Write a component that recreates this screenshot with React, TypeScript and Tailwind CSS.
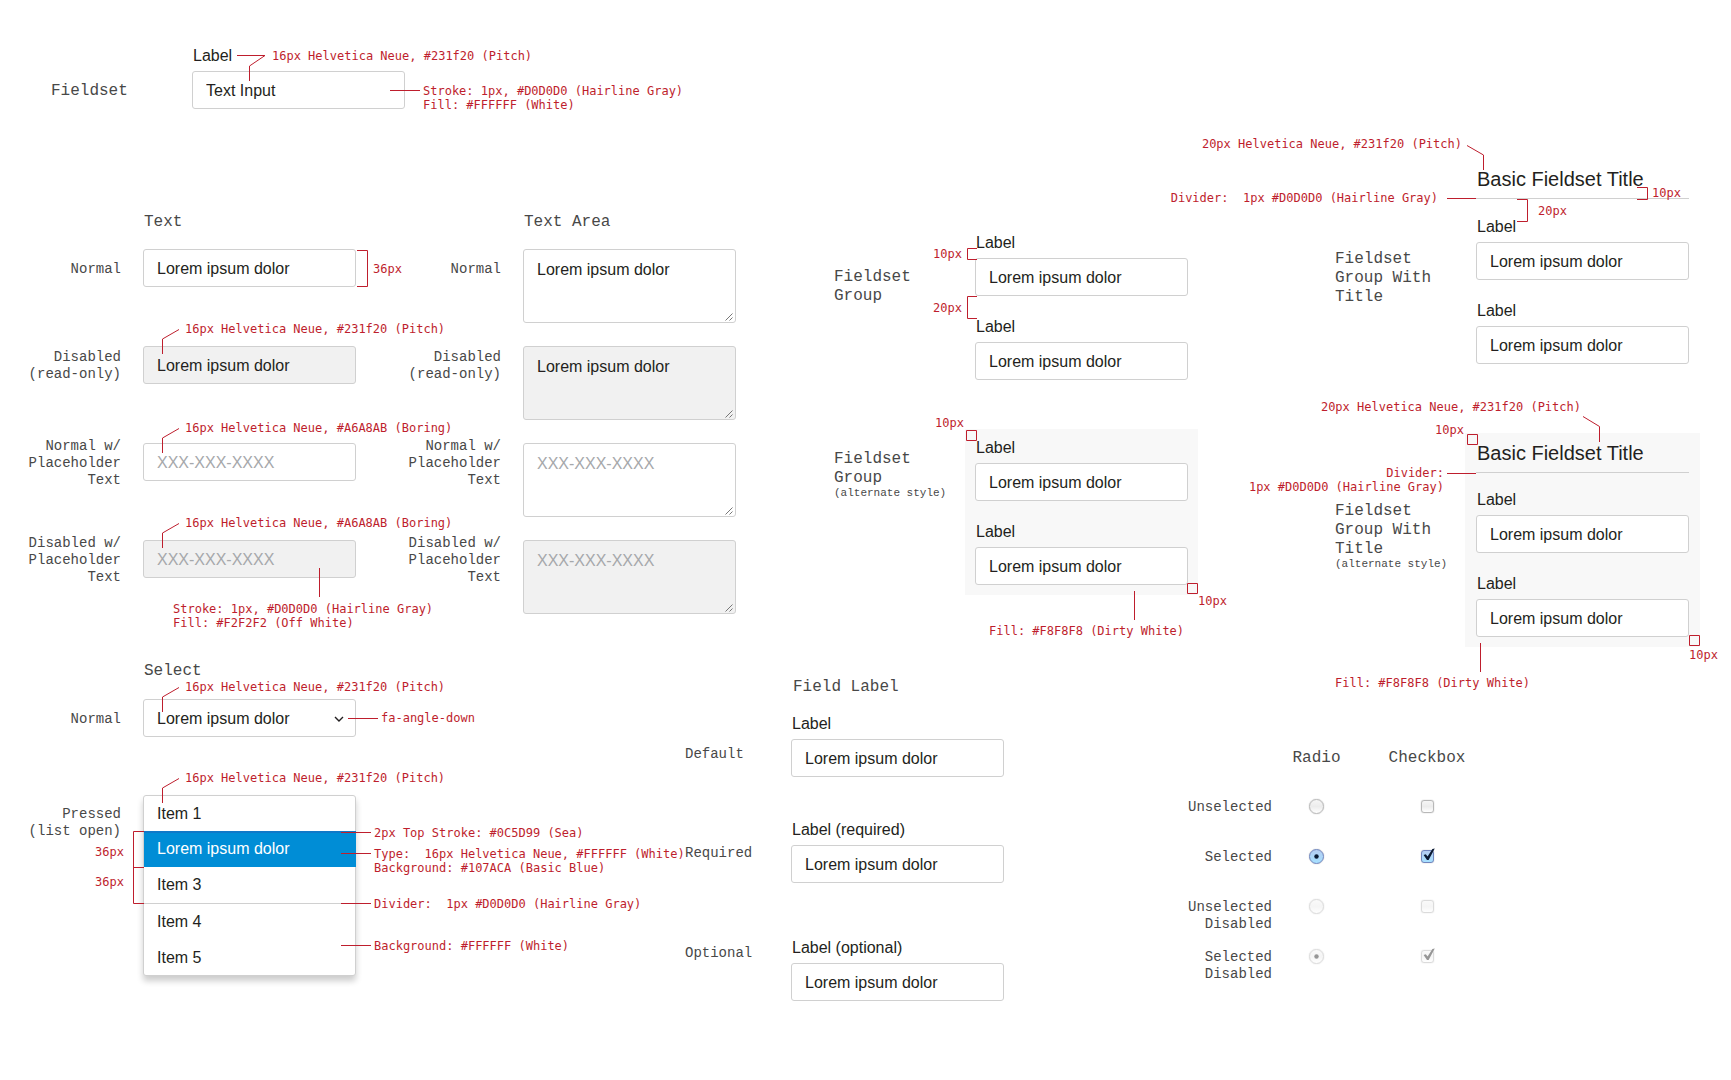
import React, { useId } from "react";
import type { ReactNode } from "react";

const RED = "#be1e2d";
const NOTE_TEXT = "whitespace-pre font-['DejaVu_Sans_Mono',monospace] text-[12px] leading-[14px] text-[#be1e2d]";
const MONO = "font-['Liberation_Mono',monospace] text-[#484848]";
const BOX = "block w-full rounded-[3px] border border-[#d0d0d0] px-[13px] text-[16px] text-[#231f20] outline-none";

const RULE = "M0 0.5 H29";
const SQUARE = "M0.5 0.5 H10.5 V10.5 H0.5 Z";

function Stroke({ className = "", w, h, d }: { className?: string; w: number; h: number; d: string }) {
  return (
    <svg
      aria-hidden="true"
      className={`shrink-0 ${className}`}
      width={w}
      height={h}
      viewBox={`0 0 ${w} ${h}`}
      fill="none"
      stroke={RED}
    >
      <path d={d} />
    </svg>
  );
}

function Over({ className, children }: { className: string; children: ReactNode }) {
  return <div className={`pointer-events-none absolute flex ${NOTE_TEXT} ${className}`}>{children}</div>;
}

function TypeNote({ className, children }: { className: string; children: ReactNode }) {
  return (
    <Over className={`left-[19px] items-start gap-1.5 ${className}`}>
      <Stroke className="mt-2" w={17} h={25} d="M17 0.5 L0.5 10 V25" />
      <p className="pt-px">{children}</p>
    </Over>
  );
}

function RuleNote({ className = "", children }: { className?: string; children: ReactNode }) {
  return (
    <div className={`flex items-start gap-[3px] ${className}`}>
      <Stroke className="mt-1.5" w={30} h={1} d="M0 0.5 H30" />
      <p>{children}</p>
    </div>
  );
}

function Heading({ className = "", children }: { className?: string; children: ReactNode }) {
  return <h2 className={`text-[16px] leading-[19px] font-normal ${MONO} ${className}`}>{children}</h2>;
}

function Side({ className = "", children }: { className?: string; children: ReactNode }) {
  return <div className={`whitespace-nowrap text-[14px] leading-[17px] ${MONO} ${className}`}>{children}</div>;
}

function Field({ label, value = "Lorem ipsum dolor" }: { label: string; value?: string }) {
  const id = useId();
  return (
    <div className="flex w-[213px] flex-col gap-[5px]">
      <label htmlFor={id} className="pt-px pl-px text-[16px] leading-5">
        {label}
      </label>
      <input id={id} type="text" defaultValue={value} className={`${BOX} h-[38px] bg-white pt-0.5`} />
    </div>
  );
}

function Fields() {
  return (
    <div className="flex flex-col gap-5">
      <Field label="Label" />
      <Field label="Label" />
    </div>
  );
}

type RowData = { label: string[]; disabled: boolean; placeholder: boolean };

const ROWS: RowData[] = [
  { label: ["Normal"], disabled: false, placeholder: false },
  { label: ["Disabled", "(read-only)"], disabled: true, placeholder: false },
  { label: ["Normal w/", "Placeholder", "Text"], disabled: false, placeholder: true },
  { label: ["Disabled w/", "Placeholder", "Text"], disabled: true, placeholder: true },
];

const ROW_NOTES: ReactNode[] = [
  <Over className="top-px left-[214px] items-center gap-[5px]">
    <Stroke w={11} h={37} d="M0 0.5 H10.5 V36.5 H0" />
    <p>36px</p>
  </Over>,
  <TypeNote className="-top-[25px]">16px Helvetica Neue, #231f20 (Pitch)</TypeNote>,
  <TypeNote className="-top-[23px]">16px Helvetica Neue, #A6A8AB (Boring)</TypeNote>,
  <>
    <TypeNote className="-top-[25px]">16px Helvetica Neue, #A6A8AB (Boring)</TypeNote>
    <Over className="top-7 left-[30px] flex-col gap-[5px]">
      <Stroke className="ml-[146px]" w={1} h={29} d="M0.5 0 V29" />
      <p>{"Stroke: 1px, #D0D0D0 (Hairline Gray)\nFill: #F2F2F2 (Off White)"}</p>
    </Over>
  </>,
];

function RowLabel({ id, lines }: { id: string; lines: string[] }) {
  return (
    <label
      htmlFor={id}
      className={`flex h-[38px] flex-col items-end justify-center pt-0.5 text-[14px] leading-[17px] whitespace-nowrap ${MONO}`}
    >
      {lines.map((l) => (
        <span key={l}>{l}</span>
      ))}
    </label>
  );
}

function Row({ row, note, index }: { row: RowData; note: ReactNode; index: number }) {
  const bg = row.disabled ? "bg-[#f1f1f1]" : "bg-white";
  const tone = "placeholder:text-[#a6a8ab]";
  const shared = {
    readOnly: row.disabled,
    defaultValue: row.placeholder ? "" : "Lorem ipsum dolor",
    placeholder: row.placeholder ? "XXX-XXX-XXXX" : undefined,
  };
  return (
    <div className="grid grid-cols-[121fr_213px_123fr_213px] gap-x-[22px]">
      <RowLabel id={`text-${index}`} lines={row.label} />
      <div className="relative h-[38px]">
        <input id={`text-${index}`} type="text" {...shared} className={`${BOX} h-[38px] pt-0.5 ${bg} ${tone}`} />
        {note}
      </div>
      <RowLabel id={`area-${index}`} lines={row.label} />
      <div className="relative">
        <textarea
          id={`area-${index}`}
          {...shared}
          className={`${BOX} h-[74px] resize-none py-2.5 leading-5 ${bg} ${tone}`}
        />
        <svg
          aria-hidden="true"
          className="pointer-events-none absolute right-[3px] bottom-[2px]"
          width="8"
          height="8"
          viewBox="0 0 8 8"
          stroke="#777"
          fill="none"
        >
          <path d="M0.5 7.5 L7.5 0.5 M4.5 7.5 L7.5 4.5" />
        </svg>
      </div>
    </div>
  );
}

function Title() {
  return (
    <h3 className="border-b border-[#d0d0d0] pb-[7px] pl-px text-[20px] leading-6 font-normal">Basic Fieldset Title</h3>
  );
}

const SKIN_ON = "border-[#7286bd] bg-linear-to-b from-[#b4cdf2] to-[#a6e0ff]";
const SKIN_OFF = "border-[#b8b8b8] bg-linear-to-b from-[#f6f6f6] via-[#ececec] to-white";

function Toggle({
  type,
  label,
  checked,
  disabled,
}: {
  type: "radio" | "checkbox";
  label: string;
  checked: boolean;
  disabled: boolean;
}) {
  const radio = type === "radio";
  const ink = disabled ? "#303030" : "#0b1a33";
  return (
    <span className={`relative inline-block ${disabled ? "opacity-50" : ""}`}>
      <input
        type={type}
        aria-label={label}
        defaultChecked={checked}
        disabled={disabled}
        className={`block appearance-none border shadow-[0_0_1px_#999] ${
          radio ? "size-[15px] rounded-full" : "size-[13px] rounded-[3px]"
        } ${checked && !disabled ? SKIN_ON : SKIN_OFF}`}
      />
      {checked && (
        <svg
          aria-hidden="true"
          className={`pointer-events-none absolute left-0 ${radio ? "top-0" : "-top-0.5"}`}
          width="15"
          height="15"
          viewBox="0 0 15 15"
        >
          {radio ? (
            <circle cx="7.5" cy="7.5" r="2.2" fill={ink} />
          ) : (
            <path d="M2.6 7 L4.8 6.2 L6.6 8.6 L11.4 1 L13.8 0.5 L7.6 12 L6 12 Z" fill={ink} />
          )}
        </svg>
      )}
    </span>
  );
}

const STATES = [
  { lines: ["Unselected"], checked: false, disabled: false },
  { lines: ["Selected"], checked: true, disabled: false },
  { lines: ["Unselected", "Disabled"], checked: false, disabled: true },
  { lines: ["Selected", "Disabled"], checked: true, disabled: true },
];

function GroupName({ className, lines, alt }: { className: string; lines: string[]; alt?: boolean }) {
  return (
    <div className={className}>
      <Heading>
        {lines.map((l) => (
          <span key={l} className="block">
            {l}
          </span>
        ))}
      </Heading>
      {alt && <p className={`text-[11px] leading-[11px] whitespace-nowrap ${MONO}`}>(alternate style)</p>}
    </div>
  );
}

export default function App() {
  return (
    <main className="min-h-screen overflow-x-hidden bg-white font-['Liberation_Sans',Arial,sans-serif] text-[#231f20]">
      <div className="grid grid-cols-[736fr_464fr_531fr]">
        <section className="pt-[45px]">
          <div className="grid grid-cols-[192fr_544fr] items-start">
            <Heading className="pt-[37px] pl-[51px]">Fieldset</Heading>
            <div className="relative">
              <Field label="Label" value="Text Input" />
              <Over className="top-1 left-[45px] items-start gap-1.5">
                <Stroke className="mt-1.5" w={29} h={26} d="M0 0.5 H28 L12.5 11 V26" />
                <p>16px Helvetica Neue, #231f20 (Pitch)</p>
              </Over>
              <Over className="top-[39px] left-[198px]">
                <RuleNote>{"Stroke: 1px, #D0D0D0 (Hairline Gray)\nFill: #FFFFFF (White)"}</RuleNote>
              </Over>
            </div>
          </div>
          <div className="mt-[104px] grid grid-cols-[121fr_213px_123fr_213px] gap-x-[22px] pb-[17px]">
            <Heading className="col-start-2 pl-px">Text</Heading>
            <Heading className="col-start-4 pl-px">Text Area</Heading>
          </div>
          <div className="flex flex-col gap-[23px]">
            {ROWS.map((row, i) => (
              <Row key={i} row={row} note={ROW_NOTES[i]} index={i} />
            ))}
          </div>
        </section>

        <section className="pt-[232px]">
          <div className="grid grid-cols-[141px_213px] justify-end pr-3">
            <GroupName className="pt-9" lines={["Fieldset", "Group"]} />
            <div className="relative">
              <Fields />
              <Over className="top-[15px] right-[211px] items-center gap-[5px]">
                <p>10px</p>
                <Stroke w={10} h={12} d="M10 0.5 H0.5 V11.5 H10" />
              </Over>
              <Over className="top-16 right-[211px] items-center gap-[5px]">
                <p>20px</p>
                <Stroke w={10} h={23} d="M10 0.5 H0.5 V22.5 H10" />
              </Over>
            </div>
          </div>
          <div className="mt-[49px] grid grid-cols-[141px_213px] justify-end pr-3">
            <GroupName className="pt-[21px]" lines={["Fieldset", "Group"]} alt />
            <div className="relative -mx-2.5 bg-[#f8f8f8] px-2.5 pt-2 pb-2.5">
              <Fields />
              <Over className="-top-[13px] right-[221px] items-start gap-0.5">
                <p>10px</p>
                <Stroke className="mt-3.5" w={11} h={11} d={SQUARE} />
              </Over>
              <Over className="top-[154px] left-[222px] items-start">
                <Stroke w={11} h={11} d={SQUARE} />
                <p className="pt-[11px]">10px</p>
              </Over>
              <Over className="top-[162px] left-6 flex-col gap-1">
                <Stroke className="ml-[145px]" w={1} h={29} d="M0.5 0 V29" />
                <p>Fill: #F8F8F8 (Dirty White)</p>
              </Over>
            </div>
          </div>
        </section>

        <section className="pt-[167px]">
          <div className="grid grid-cols-[141px_213px] justify-end pr-[42px]">
            <GroupName className="pt-[83px]" lines={["Fieldset", "Group With", "Title"]} />
            <div className="relative flex flex-col gap-[17px]">
              <Title />
              <Fields />
              <Over className="-top-[30px] right-[204px] items-start gap-[5px]">
                <p>20px Helvetica Neue, #231f20 (Pitch)</p>
                <Stroke className="mt-2" w={18} h={25} d="M0 0.5 L16.5 10 V25" />
              </Over>
              <Over className="top-6 right-[213px] items-center gap-[9px]">
                <p>{"Divider:  1px #D0D0D0 (Hairline Gray)"}</p>
                <Stroke w={29} h={1} d={RULE} />
              </Over>
              <Over className="top-[19px] left-[161px] items-center gap-1">
                <Stroke w={11} h={13} d="M0 0.5 H10.5 V12.5 H0" />
                <p>10px</p>
              </Over>
              <Over className="top-8 left-[41px] items-center gap-2.5">
                <Stroke w={11} h={23} d="M0 0.5 H10.5 V22.5 H0" />
                <p>20px</p>
              </Over>
            </div>
          </div>
          <div className="mt-[69px] grid grid-cols-[141px_213px] justify-end pr-[42px]">
            <GroupName className="pt-[69px]" lines={["Fieldset", "Group With", "Title"]} alt />
            <div className="relative -mx-[11px] flex flex-col gap-4 bg-[#f8f8f8] px-[11px] pt-2 pb-2.5">
              <Title />
              <Fields />
              <Over className="-top-[33px] right-[99px] items-start gap-0.5">
                <p>20px Helvetica Neue, #231f20 (Pitch)</p>
                <Stroke className="mt-4" w={18} h={26} d="M0 0.5 L16.5 10.5 V26" />
              </Over>
              <Over className="-top-[10px] right-[222px] items-start gap-[3px]">
                <p>10px</p>
                <Stroke className="mt-[11px]" w={11} h={11} d={SQUARE} />
              </Over>
              <Over className="top-[33px] right-[224px] items-start gap-[3px] text-right">
                <p>{"Divider:\n1px #D0D0D0 (Hairline Gray)"}</p>
                <Stroke className="mt-[7px]" w={29} h={1} d={RULE} />
              </Over>
              <Over className="top-[202px] left-[224px] flex-col gap-0.5">
                <Stroke w={11} h={11} d={SQUARE} />
                <p>10px</p>
              </Over>
              <Over className="top-[210px] -left-[130px] flex-col gap-1">
                <Stroke className="ml-[145px]" w={1} h={29} d="M0.5 0 V29" />
                <p>Fill: #F8F8F8 (Dirty White)</p>
              </Over>
            </div>
          </div>
        </section>
      </div>

      <div className="mt-[13px] grid grid-cols-[685fr_480fr_566fr]">
        <section>
          <div className="grid grid-cols-[121fr_542fr] gap-x-[22px]">
            <Heading className="col-start-2 pt-0.5 pb-[18px] pl-px">Select</Heading>
            <RowLabel id="select-normal" lines={["Normal"]} />
            <div className="relative w-[213px]">
              <select id="select-normal" className={`${BOX} h-[38px] appearance-none bg-white pt-0.5`}>
                <option>Lorem ipsum dolor</option>
              </select>
              <svg
                aria-hidden="true"
                className="pointer-events-none absolute top-[17px] right-3"
                width="10"
                height="7"
                viewBox="0 0 10 7"
                fill="none"
                stroke="#231f20"
                strokeWidth="1.4"
              >
                <path d="M1 1 L5 5 L9 1" />
              </svg>
              <TypeNote className="-top-5">16px Helvetica Neue, #231f20 (Pitch)</TypeNote>
              <Over className="top-3 left-[205px] items-center gap-[3px]">
                <Stroke w={30} h={1} d="M0 0.5 H30" />
                <p>fa-angle-down</p>
              </Over>
            </div>
            <Side className="mt-[69px] text-right">
              Pressed
              <br />
              (list open)
            </Side>
            <div className="relative mt-[58px] w-[213px]">
              <ul
                role="listbox"
                aria-label="Pressed (list open)"
                className="rounded-[3px] border border-[#d0d0d0] bg-white text-[16px] shadow-[0_5px_6px_rgba(0,0,0,0.2)]"
              >
                <li role="option" aria-selected="false" className="flex h-[35px] items-center px-[13px]">
                  Item 1
                </li>
                <li
                  role="option"
                  aria-selected="true"
                  className="-mr-px flex h-9 items-center border-t-2 border-[#1079c8] bg-[#008dd6] px-[13px] pb-0.5 text-white"
                >
                  Lorem ipsum dolor
                </li>
                <li
                  role="option"
                  aria-selected="false"
                  className="flex h-[37px] items-center border-b border-[#d0d0d0] px-[13px]"
                >
                  Item 3
                </li>
                <li role="option" aria-selected="false" className="flex h-9 items-center px-[13px]">
                  Item 4
                </li>
                <li role="option" aria-selected="false" className="flex h-[35px] items-center px-[13px]">
                  Item 5
                </li>
              </ul>
              <TypeNote className="-top-[25px]">16px Helvetica Neue, #231f20 (Pitch)</TypeNote>
              <Over className="top-9 right-[212px] items-center gap-[9px]">
                <div className="flex flex-col gap-4 pb-0.5">
                  <p>36px</p>
                  <p>36px</p>
                </div>
                <Stroke w={11} h={73} d="M11 0.5 H0.5 V72.5 H11 M0.5 36.5 H11" />
              </Over>
              <Over className="top-[31px] left-[198px] flex-col">
                <RuleNote>2px Top Stroke: #0C5D99 (Sea)</RuleNote>
                <RuleNote className="mt-[7px]">
                  {"Type:  16px Helvetica Neue, #FFFFFF (White)\nBackground: #107ACA (Basic Blue)"}
                </RuleNote>
                <RuleNote className="mt-[22px]">{"Divider:  1px #D0D0D0 (Hairline Gray)"}</RuleNote>
                <RuleNote className="mt-7">Background: #FFFFFF (White)</RuleNote>
              </Over>
            </div>
          </div>
        </section>

        <section className="pt-[18px]">
          <div className="grid grid-cols-[106px_213px]">
            <Heading className="col-start-2 pl-0.5">Field Label</Heading>
            <Side className="pt-[49px]">Default</Side>
            <div className="pt-4">
              <Field label="Label" />
            </div>
            <Side className="pt-[68px]">Required</Side>
            <div className="pt-[42px]">
              <Field label="Label (required)" />
            </div>
            <Side className="pt-[62px]">Optional</Side>
            <div className="pt-[54px]">
              <Field label="Label (optional)" />
            </div>
          </div>
        </section>

        <section className="pt-[89px]">
          <table className="table-fixed border-collapse">
            <colgroup>
              <col className="w-[107px]" />
              <col className="w-[89px]" />
              <col className="w-[132px]" />
            </colgroup>
            <thead>
              <tr className="h-[50px] align-top">
                <td />
                <th scope="col" className={`p-0 text-[16px] leading-[19px] font-normal ${MONO}`}>
                  Radio
                </th>
                <th scope="col" className={`p-0 text-[16px] leading-[19px] font-normal ${MONO}`}>
                  Checkbox
                </th>
              </tr>
            </thead>
            <tbody>
              {STATES.map((s) => {
                const name = s.lines.join(" ");
                return (
                  <tr key={name} className="h-[50px] align-top">
                    <th scope="row" className={`p-0 text-right text-[14px] leading-[17px] font-normal ${MONO}`}>
                      {s.lines.map((l) => (
                        <span key={l} className="block">
                          {l}
                        </span>
                      ))}
                    </th>
                    <td className="p-0 text-center leading-[0]">
                      <Toggle type="radio" label={`Radio ${name}`} checked={s.checked} disabled={s.disabled} />
                    </td>
                    <td className="p-0 pt-px text-center leading-[0]">
                      <Toggle type="checkbox" label={`Checkbox ${name}`} checked={s.checked} disabled={s.disabled} />
                    </td>
                  </tr>
                );
              })}
            </tbody>
          </table>
        </section>
      </div>
    </main>
  );
}
